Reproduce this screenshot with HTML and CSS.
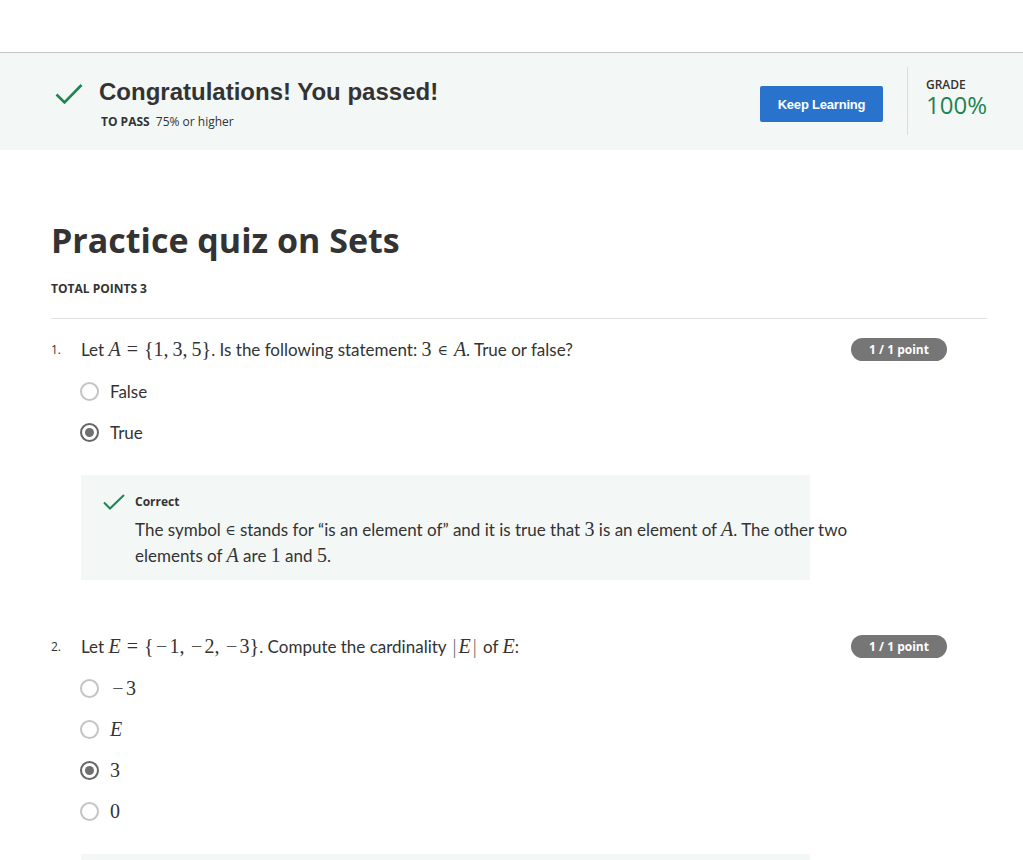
FILE: index.html
```html
<!DOCTYPE html>
<html>
<head>
<meta charset="utf-8">
<link rel="stylesheet" href="styles.css">
</head>
<body>
<div class="topbar"></div>
<div class="banner">
  <div class="banner-left">
    <svg class="banner-check" width="28" height="22" viewBox="0 0 28 22"><path d="M1.5 11.5 L9.5 19.5 L26.5 2" fill="none" stroke="#1f8354" stroke-width="2.6"/></svg>
    <div class="banner-text">
      <div class="congrats">Congratulations! You passed!</div>
      <div class="topass"><b>TO PASS</b> 75% or higher</div>
    </div>
  </div>
  <div class="banner-right">
    <button class="keep">Keep Learning</button>
    <div class="divider"></div>
    <div class="grade">
      <div class="grade-label">GRADE</div>
      <div class="grade-value">100%</div>
    </div>
  </div>
</div>
<main class="content">
  <h1 class="title">Practice quiz on Sets</h1>
  <div class="total">TOTAL POINTS 3</div>
  <div class="rule"></div>

  <section class="question">
    <div class="qhead">
      <span class="qnum">1.</span>
      <div class="qtext">Let <span class="math"><i>A</i><span class="rel">=</span>{1,<span class="th"></span>3,<span class="th"></span>5}</span>. Is the following statement: <span class="math">3<span class="rel in">∈</span><i>A</i></span>. True or false?</div>
      <span class="badge">1 / 1 point</span>
    </div>
    <div class="options">
      <div class="opt"><span class="radio"></span><span class="otext">False</span></div>
      <div class="opt"><span class="radio on"></span><span class="otext">True</span></div>
    </div>
    <div class="feedback">
      <div class="fb-head">
        <svg class="fb-check" width="22" height="16" viewBox="0 0 22 16"><path d="M1 8.5 L7 14.5 L21 1" fill="none" stroke="#1f8354" stroke-width="2"/></svg>
        <span class="fb-title">Correct</span>
      </div>
      <div class="fb-text">The symbol <span class="math"><span class="in">∈</span></span> stands for “is an element of” and it is true that <span class="math">3</span> is an element of <span class="math"><i>A</i></span>. The other two elements of <span class="math"><i>A</i></span> are <span class="math">1</span> and <span class="math">5</span>.</div>
    </div>
  </section>

  <section class="question q2">
    <div class="qhead">
      <span class="qnum">2.</span>
      <div class="qtext">Let <span class="math"><i>E</i><span class="rel">=</span>{<span class="mi">−</span>1,<span class="th"></span><span class="mi">−</span>2,<span class="th"></span><span class="mi">−</span>3}</span>. Compute the cardinality <span class="math"><span class="bar">|</span><i>E</i><span class="bar">|</span></span> of <span class="math"><i>E</i></span>:</div>
      <span class="badge">1 / 1 point</span>
    </div>
    <div class="options">
      <div class="opt"><span class="radio"></span><span class="otext math"><span class="mi">−</span>3</span></div>
      <div class="opt"><span class="radio"></span><span class="otext math"><i>E</i></span></div>
      <div class="opt"><span class="radio on"></span><span class="otext math">3</span></div>
      <div class="opt"><span class="radio"></span><span class="otext math">0</span></div>
    </div>
    <div class="feedback"></div>
  </section>
</main>
</body>
</html>
```
FILE: styles.css
```css
* { box-sizing: border-box; }
html, body { margin: 0; padding: 0; background: #fff; }
body { font-family: Lato, "Open Sans", sans-serif; color: #333; overflow: hidden; height: 860px; }

.topbar { height: 53px; border-bottom: 1px solid #c6c6c6; background: #fff; }

.banner {
  height: 97px;
  background: #f3f8f6;
  display: flex;
  justify-content: space-between;
  align-items: flex-start;
  padding: 0 0 0 55px;
}
.banner-left { display: flex; align-items: flex-start; padding-top: 26px; }
.banner-check { margin-top: 4px; margin-right: 16px; }
.congrats {
  font-family: "Liberation Sans", Arial, sans-serif;
  font-weight: bold;
  font-size: 24px;
  line-height: 26px;
  color: #333;
}
.topass {
  font-family: "Open Sans", sans-serif;
  font-size: 12px;
  line-height: 16px;
  margin-top: 9px;
  margin-left: 2px;
  color: #333;
}
.topass b { font-weight: 700; margin-right: 3px; }

.banner-right { display: flex; align-items: flex-start; padding-top: 14px; }
.keep {
  margin-top: 19px;
  width: 123px;
  height: 36px;
  background: #2a73cc;
  color: #fff;
  border: none;
  border-radius: 2px;
  font-family: "Liberation Sans", Arial, sans-serif;
  font-weight: bold;
  font-size: 13px;
  letter-spacing: -0.2px;
}
.divider { width: 1px; height: 68px; background: #dcdcdc; margin-left: 24px; margin-right: 18px; }
.grade { width: 97px; padding-top: 10px; }
.grade-label { font-family: "Open Sans", sans-serif; font-size: 12px; font-weight: 600; color: #333; line-height: 16px; }
.grade-value { font-family: "Open Sans", sans-serif; font-size: 24px; color: #1f8354; line-height: 26px; margin-top: -1px; }

.content { padding: 0 36px 0 51px; }
.title {
  font-family: "Open Sans", sans-serif;
  font-weight: 700;
  font-size: 34px;
  line-height: 44px;
  margin: 68px 0 0 0;
  color: #333;
}
.total {
  font-family: "Open Sans", sans-serif;
  font-size: 12px;
  line-height: 16px;
  font-weight: 700;
  margin-top: 19px;
  color: #333;
}
.rule { height: 1px; background: #e1e1e1; margin-top: 21px; }

.question { margin-top: 19px; }
.q2 { margin-top: 55px; }
.qhead { display: flex; align-items: center; height: 23px; padding-right: 40px; }
.qnum { width: 30px; font-size: 12px; color: #333; font-family: "Open Sans", sans-serif; }
.qtext { flex: 1; font-size: 17px; color: #333; white-space: nowrap; }
.badge {
  background: #767676;
  color: #fff;
  border-radius: 12px;
  height: 23px;
  width: 96px;
  font-family: "Open Sans", sans-serif;
  font-weight: 700;
  font-size: 12px;
  display: flex;
  align-items: center;
  justify-content: center;
}
.math { font-family: "Liberation Serif", "DejaVu Serif", serif; font-size: 20px; }
.math i { font-style: italic; }
.rel { display: inline-block; margin: 0 6px; }
.th { display: inline-block; width: 4px; }
.mi { display: inline-block; width: 16px; text-align: center; color: #555; }
.bar { display: inline-block; margin: 0 2px; color: #777; }
.in { font-family: "DejaVu Serif", serif; font-size: 14px; vertical-align: 1px; }

.options { margin-left: 29px; margin-top: 20px; display: flex; flex-direction: column; gap: 21px; }
.opt { display: flex; align-items: center; height: 20px; }
.radio {
  width: 19px; height: 19px;
  border: 2px solid #c4c4c4;
  border-radius: 50%;
  margin-right: 11px;
  display: flex; align-items: center; justify-content: center;
}
.radio.on { border-color: #666; }
.radio.on::after { content: ""; width: 9px; height: 9px; border-radius: 50%; background: #707070; }
.otext { font-size: 17px; color: #333; }
.otext.math { font-size: 20px; }

.feedback {
  margin: 33px 0 0 30px;
  width: 729px;
  height: 105px;
  background: #f3f8f6;
  padding: 18px 0 0 22px;
}
.fb-head { display: flex; align-items: center; }
.fb-check { margin-right: 10px; }
.fb-title { font-family: "Open Sans", sans-serif; font-size: 12px; font-weight: 700; color: #333; }
.fb-text { width: 730px; margin-left: 32px; margin-top: 7px; font-size: 17px; line-height: 25px; color: #333; }
```
